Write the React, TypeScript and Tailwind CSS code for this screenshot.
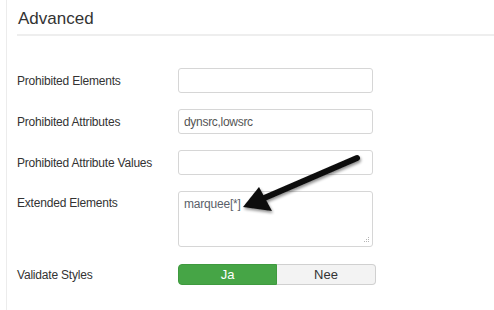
import React from 'react';

const font = { fontFamily: '"Liberation Sans", Arial, sans-serif' };

function Row({ label, children, top = false }: { label: string; children: React.ReactNode; top?: boolean }) {
  return (
    <div className={`flex ${top ? 'items-start' : 'items-center'}`}>
      <div className={`w-[161px] shrink-0 text-[12px] tracking-[-0.2px] text-[#333] ${top ? 'leading-[25px]' : ''}`}>{label}</div>
      {children}
    </div>
  );
}

function TextInput({ value = '' }: { value?: string }) {
  return (
    <input
      readOnly
      value={value}
      className="h-[25px] w-[195px] rounded-[3px] border border-[#d6d6d6] bg-white px-[5px] text-[12px] tracking-[-0.3px] text-[#555] outline-none"
      style={font}
    />
  );
}

export default function App() {
  return (
    <div className="relative h-[310px] w-[494px] overflow-hidden bg-white" style={font}>
      <div className="ml-[6px] h-full border-l border-[#ececec] pl-[10px] pt-[9px]">
        <h2 className="border-b-2 border-[#eeeeee] pb-[5px] pl-[1px] text-[17px] leading-[20px] font-normal text-[#333]">
          Advanced
        </h2>

        <div className="mt-[32px] flex flex-col gap-[16px]">
          <Row label="Prohibited Elements">
            <TextInput />
          </Row>
          <Row label="Prohibited Attributes">
            <TextInput value="dynsrc,lowsrc" />
          </Row>
          <Row label="Prohibited Attribute Values">
            <TextInput />
          </Row>
          <Row label="Extended Elements" top>
            <div className="relative">
              <textarea
                readOnly
                value="marquee[*]"
                className="block h-[56px] w-[195px] resize-none rounded-[3px] border border-[#d6d6d6] bg-white px-[5px] pt-[5px] text-[12px] leading-[15px] tracking-[-0.2px] text-[#5a5f6a] outline-none"
                style={font}
              />
              <svg className="absolute bottom-[3px] right-[3px]" width="7" height="7" viewBox="0 0 7 7">
                <g fill="#b5b5b5">
                  <rect x="5" y="0" width="1" height="1" />
                  <rect x="3" y="2" width="1" height="1" />
                  <rect x="5" y="2" width="1" height="1" />
                  <rect x="1" y="4" width="1" height="1" />
                  <rect x="3" y="4" width="1" height="1" />
                  <rect x="5" y="4" width="1" height="1" />
                </g>
              </svg>
            </div>
          </Row>
          <div className="mt-[1px]">
            <Row label="Validate Styles">
              <div className="flex h-[21px] w-[198px] text-[13px]">
                <div className="flex w-[99px] items-center justify-center rounded-l-[4px] border border-[#3f9a3f] bg-[#46a546] text-white">
                  Ja
                </div>
                <div className="flex w-[99px] items-center justify-center rounded-r-[4px] border border-l-0 border-[#d0d0d0] bg-[#f3f3f3] text-[#333]">
                  Nee
                </div>
              </div>
            </Row>
          </div>
        </div>
      </div>

      {/* annotation arrow */}
      <svg className="pointer-events-none absolute left-0 top-0" width="494" height="310" viewBox="0 0 494 310">
        <defs>
          <filter id="sh" x="-20%" y="-20%" width="140%" height="140%">
            <feGaussianBlur in="SourceAlpha" stdDeviation="1.5" />
            <feOffset dx="1" dy="2" result="b" />
            <feComponentTransfer>
              <feFuncA type="linear" slope="0.45" />
            </feComponentTransfer>
            <feMerge>
              <feMergeNode />
              <feMergeNode in="SourceGraphic" />
            </feMerge>
          </filter>
        </defs>
        <g filter="url(#sh)">
          <line x1="357" y1="158" x2="262" y2="199" stroke="#111" strokeWidth="6" strokeLinecap="round" />
          <polygon points="243,207 259,187 272,211" fill="#111" />
        </g>
      </svg>
    </div>
  );
}
